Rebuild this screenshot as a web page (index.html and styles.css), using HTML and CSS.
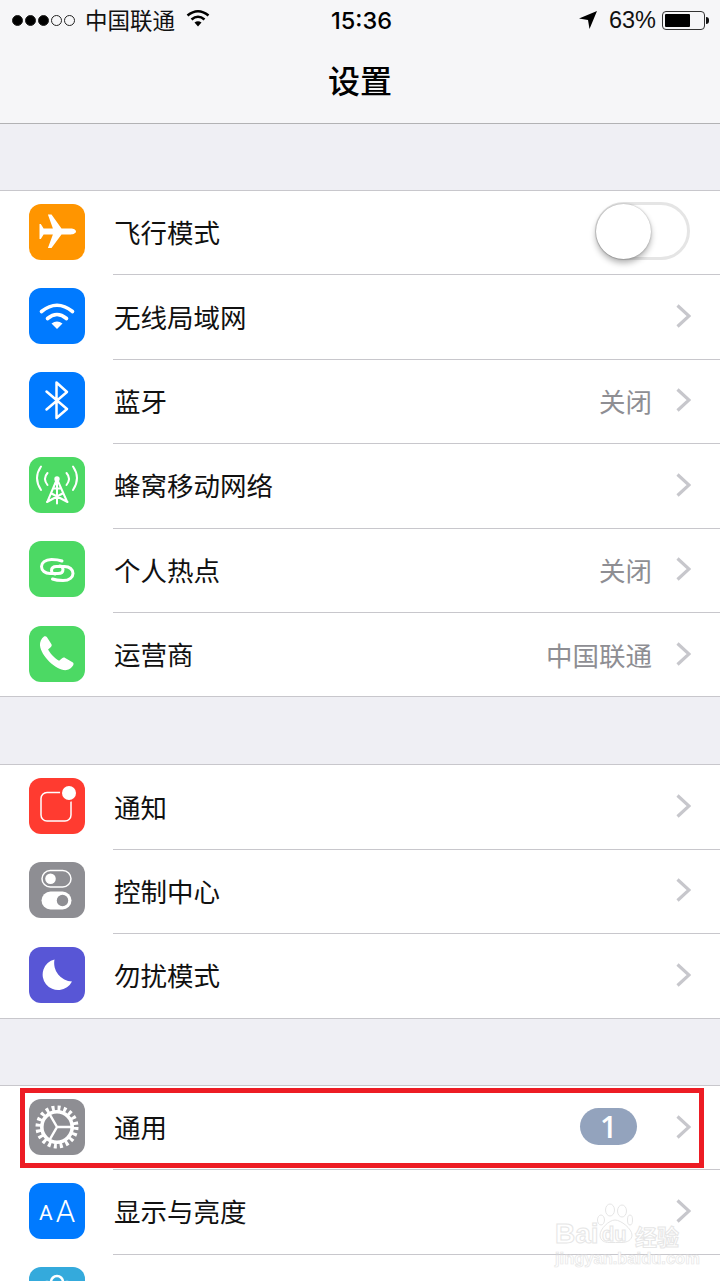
FILE: index.html
```html
<!DOCTYPE html>
<html lang="zh-CN">
<head>
    <meta charset="UTF-8">
    <meta name="viewport" content="width=device-width, initial-scale=1.0">
    <title>设置</title>
    <link rel="stylesheet" href="styles.css">
</head>
<body>
    <div class="screen">
        <header class="top">
            <div class="status">
                <div class="status-left">
                    <span class="dots"><i class="on"></i><i class="on"></i><i class="on"></i><i></i><i></i></span>
                    <span class="carrier">中国联通</span>
                    <svg class="st-wifi" viewBox="0 0 24 18" width="24" height="18">
                        <path class="st-arc" d="M1.500 6.500Q12-2 22.500 6.500M5.500 10.500Q12 5 18.500 10.500"/>
                        <path d="M12 17.500L8.500 13.500Q12 11 15.500 13.500Z"/>
                    </svg>
                </div>
                <div class="time">15:36</div>
                <div class="status-right">
                    <svg class="st-loc" viewBox="0 0 18 18" width="18" height="18"><path d="M18 0L10.500 18 9 9 0 7.500Z"/></svg>
                    <span class="pct">63%</span>
                    <span class="battery"><span class="battery-fill"></span></span>
                    <span class="battery-nub"></span>
                </div>
            </div>
            <div class="nav-title">设置</div>
        </header>

        <section class="group">
            <div class="row">
                <span class="icon orange">
                    <svg viewBox="0 0 56 56"><path class="w" d="M47 27.500c0-1.600-2.600-2.900-5-2.900H32.500L22.500 10.500h-3.600l5 14.100h-9.300l-2.800-4.500h-1.300v14.800h1.300l2.800-4.500h9.300l-5 13.700h3.600l10-13.700H42c2.400 0 5-1.300 5-2.900z"/></svg>
                </span>
                <span class="label">飞行模式</span>
                <span class="toggle"><span class="knob"></span></span>
            </div>
            <div class="row">
                <span class="icon blue">
                    <svg viewBox="0 0 56 56">
                        <path class="s s4" d="M12.500 23.500Q28 11 43.500 23.500"/>
                        <path class="s s4" d="M18.500 30.500Q28 22.500 37.500 30.500"/>
                        <path class="w" d="M28 41L22.500 35.500Q28 31.500 33.500 35.500Z"/>
                    </svg>
                </span>
                <span class="label">无线局域网</span>
                <svg class="chev" viewBox="0 0 15 24"><path d="M1.500 1.500L13 12 1.500 22.500"/></svg>
            </div>
            <div class="row">
                <span class="icon blue">
                    <svg viewBox="0 0 56 56"><path class="s s25" d="M17.500 19.500L38 37 27.500 46V10.500L38 20 17.500 37.500"/></svg>
                </span>
                <span class="label">蓝牙</span>
                <span class="value">关闭</span>
                <svg class="chev" viewBox="0 0 15 24"><path d="M1.500 1.500L13 12 1.500 22.500"/></svg>
            </div>
            <div class="row">
                <span class="icon green">
                    <svg viewBox="0 0 56 56">
                        <path class="s s2" d="M12 9.500Q4 21 12 33M44 9.500Q52 21 44 33M18.500 16Q13.500 21.500 18.500 28M37.500 16Q42.500 21.500 37.500 28"/>
                        <circle class="w" cx="28" cy="22" r="2.700"/>
                        <path class="s s2" d="M28 22V46.500M28 22L18.500 44.500M28 22L38 44.500M18 45L33.500 36.500M38.500 45L22.500 36.500M24.500 31.500H31.500"/>
                    </svg>
                </span>
                <span class="label">蜂窝移动网络</span>
                <svg class="chev" viewBox="0 0 15 24"><path d="M1.500 1.500L13 12 1.500 22.500"/></svg>
            </div>
            <div class="row">
                <span class="icon green">
                    <svg viewBox="0 0 56 56">
                        <path class="s s27" d="M33 20C29 18.500 26 18.500 22.500 18.500C16 18.500 12.500 22 12.500 25.500C12.500 29.500 16 32.500 21 32.500H29C32 32.500 34 31 34 28.500C34 26.500 32.500 25 30.500 25"/>
                        <path class="s s27" d="M23.500 38C27.500 39.500 30.500 39.500 34 39.500C40.500 39.500 44 36 44 32.500C44 28.500 40.500 25.500 35.500 25.500H27.500C24.500 25.500 22.500 27 22.500 29.500C22.500 31.500 24 33 26 33"/>
                    </svg>
                </span>
                <span class="label">个人热点</span>
                <span class="value">关闭</span>
                <svg class="chev" viewBox="0 0 15 24"><path d="M1.500 1.500L13 12 1.500 22.500"/></svg>
            </div>
            <div class="row">
                <span class="icon green">
                    <svg viewBox="0 0 56 56"><path class="w" d="M15 10.500c1.100-.6 2.300-.3 3 .8l4.300 6.600c.7 1 .5 2.200-.4 3l-2.800 2.500c1.600 3.400 6.500 8.900 11 11.300l3-2.500c.9-.7 2.100-.8 3.100-.2l7.300 4.300c1.100.6 1.400 1.900.7 2.900-1.600 2.400-3.800 4.500-6.800 4.900C27.500 45 12 30 11 19.500c-.3-3.500 1.200-7 4-9z"/></svg>
                </span>
                <span class="label">运营商</span>
                <span class="value">中国联通</span>
                <svg class="chev" viewBox="0 0 15 24"><path d="M1.500 1.500L13 12 1.500 22.500"/></svg>
            </div>
        </section>

        <section class="group">
            <div class="row">
                <span class="icon red">
                    <svg viewBox="0 0 56 56">
                        <rect class="s s15" x="12" y="14.500" width="30" height="28.500" rx="6"/>
                        <circle class="dot-halo" cx="40" cy="15" r="9"/>
                        <circle class="w" cx="40" cy="15" r="7"/>
                    </svg>
                </span>
                <span class="label">通知</span>
                <svg class="chev" viewBox="0 0 15 24"><path d="M1.500 1.500L13 12 1.500 22.500"/></svg>
            </div>
            <div class="row">
                <span class="icon gray">
                    <svg viewBox="0 0 56 56">
                        <rect class="s s15" x="13" y="8.500" width="29" height="16.500" rx="8.250"/>
                        <circle class="w" cx="21.500" cy="16.800" r="5.300"/>
                        <rect class="w" x="12.500" y="29.500" width="30" height="18" rx="9"/>
                        <circle class="gray-fill" cx="33.500" cy="38.500" r="5.700"/>
                    </svg>
                </span>
                <span class="label">控制中心</span>
                <svg class="chev" viewBox="0 0 15 24"><path d="M1.500 1.500L13 12 1.500 22.500"/></svg>
            </div>
            <div class="row">
                <span class="icon indigo">
                    <svg viewBox="0 0 56 56"><path class="w" d="M25.500 12.500A15.500 15.500 0 1 0 43 34.500 18.500 18.500 0 0 1 25.500 12.500Z"/></svg>
                </span>
                <span class="label">勿扰模式</span>
                <svg class="chev" viewBox="0 0 15 24"><path d="M1.500 1.500L13 12 1.500 22.500"/></svg>
            </div>
        </section>

        <section class="group group-last">
            <div class="row">
                <span class="icon gray">
                    <svg viewBox="0 0 56 56">
                        <circle class="teeth" cx="28" cy="28" r="18.500"/>
                        <circle class="s s35" cx="28" cy="28" r="15.200"/>
                        <path class="s s25" d="M28 28H43M28 28L20.500 15M28 28L20.500 41"/>
                    </svg>
                </span>
                <span class="label">通用</span>
                <span class="badge">1</span>
                <svg class="chev" viewBox="0 0 15 24"><path d="M1.500 1.500L13 12 1.500 22.500"/></svg>
            </div>
            <div class="row">
                <span class="icon blue aa"><span class="aa-s">A</span><span class="aa-b">A</span></span>
                <span class="label">显示与亮度</span>
                <svg class="chev" viewBox="0 0 15 24"><path d="M1.500 1.500L13 12 1.500 22.500"/></svg>
            </div>
            <div class="row">
                <span class="icon sky">
                    <svg viewBox="0 0 56 56">
                        <circle class="s s25" cx="28" cy="15" r="6"/>
                        <circle class="s s25" cx="18" cy="21" r="6"/>
                        <circle class="s s25" cx="38" cy="21" r="6"/>
                    </svg>
                </span>
            </div>
        </section>

        <!-- red annotation box and watermark sit over the list -->
        <div class="mark-box"></div>
        <div class="watermark">
            <svg class="paw" viewBox="0 0 36 40" width="36" height="40">
                <ellipse cx="13" cy="7" rx="4.500" ry="6"/>
                <ellipse cx="25" cy="8" rx="4.500" ry="6"/>
                <ellipse cx="4" cy="17" rx="3.500" ry="5"/>
                <ellipse cx="33" cy="17" rx="2.500" ry="5"/>
                <path d="M18 17C12 17 3 26 3 32 3 38 8 39.500 12 39.500 16 39.500 21 39.500 25 39.500 30 39.500 35 37 35 32 35 26 24 17 18 17Z"/>
            </svg>
            <div class="wm-brand">Bai</div>
            <div class="wm-du">du</div>
            <div class="wm-cn">经验</div>
            <div class="wm-url">jingyan.baidu.com</div>
        </div>
    </div>
</body>
</html>
```

FILE: styles.css
```css
* {
    margin: 0;
    padding: 0;
    box-sizing: border-box;
}

html, body {
    height: 100%;
    overflow: hidden;
}

body {
    font-family: "Noto Sans CJK SC", "Liberation Sans", sans-serif;
    background-color: #efeff4;
    color: #000;
}

.screen {
    position: relative;
    width: 720px;
    height: 1281px;
    overflow: hidden;
}

/* status bar + nav */
.top {
    height: 124px;
    background-color: #f6f6f8;
    border-bottom: 1px solid #b2b2b4;
}

.status {
    height: 40px;
    display: grid;
    grid-template-columns: 1fr auto 1fr;
    align-items: center;
    padding: 0 11px 0 12px;
}

.status-left, .status-right {
    display: flex;
    align-items: center;
}

.status-right {
    justify-content: flex-end;
}

.dots {
    display: flex;
    gap: 2px;
}

.dots i {
    width: 11px;
    height: 11px;
    border-radius: 50%;
    border: 1px solid #222;
}

.dots i.on {
    background-color: #000;
}

.carrier {
    margin-left: 10px;
    margin-top: -3px;
    font-size: 22.5px;
    line-height: 40px;
    color: #111;
}

.st-wifi {
    margin-left: 11px;
    margin-top: -5px;
}

.st-arc {
    fill: none;
    stroke: #000;
    stroke-width: 2.6;
}

.time {
    font-family: "Inter", "Liberation Sans", sans-serif;
    font-size: 23.5px;
    font-weight: 500;
    margin-left: 2px;
}

.st-loc {
    margin-right: 12px;
}

.pct {
    font-family: "Liberation Sans", sans-serif;
    font-size: 23.5px;
    margin-right: 6px;
    color: #111;
}

.battery {
    width: 43px;
    height: 19px;
    border: 1px solid #333;
    border-radius: 4px;
    padding: 2px;
    display: block;
}

.battery-fill {
    display: block;
    width: 25px;
    height: 100%;
    background-color: #000;
    border-radius: 1px;
}

.battery-nub {
    width: 3px;
    height: 7px;
    background-color: #111;
    border-radius: 0 3px 3px 0;
    margin-left: 1px;
}

.nav-title {
    height: 83px;
    line-height: 78px;
    text-align: center;
    font-size: 32px;
    font-weight: 500;
}

/* list groups */
.group {
    margin-top: 67px;
    background-color: #fff;
    border-top: 1px solid #c8c7cc;
}

.top + .group {
    margin-top: 66px;
}

.group-last {
    margin-top: 66.4px;
}

.row {
    height: 84.4px;
    display: flex;
    align-items: center;
    padding: 0 29px 2px;
    position: relative;
    border-bottom: 1px solid #c8c7cc;
}

.row::after {
    content: "";
    position: absolute;
    left: 0;
    bottom: -1px;
    width: 113px;
    height: 1px;
    background-color: #fff;
}

.row:last-child::after {
    display: none;
}

.icon {
    width: 56px;
    height: 56px;
    border-radius: 12px;
    flex-shrink: 0;
    display: block;
}

.icon svg {
    display: block;
    width: 56px;
    height: 56px;
}

.orange { background-color: #ff9500; }
.blue { background-color: #007aff; }
.green { background-color: #4cd964; }
.red { background-color: #ff3b30; }
.gray { background-color: #8e8e93; }
.indigo { background-color: #5856d6; }
.sky { background-color: #34aadc; }

.w { fill: #fff; }
.gray-fill { fill: #8e8e93; }
.dot-halo { fill: #ff3b30; }

.s {
    fill: none;
    stroke: #fff;
    stroke-linecap: round;
    stroke-linejoin: round;
}

.s15 { stroke-width: 1.500; }
.s2 { stroke-width: 2; }
.s25 { stroke-width: 2.500; }
.s27 { stroke-width: 3; }
.s35 { stroke-width: 3.600; }
.s4 { stroke-width: 3.600; }

.teeth {
    fill: none;
    stroke: #fff;
    stroke-width: 6;
    stroke-dasharray: 2.906 2.906;
}

.aa {
    display: flex;
    align-items: baseline;
    justify-content: center;
    color: #fff;
    font-family: "Roboto", "Liberation Sans", sans-serif;
    font-weight: 300;
    line-height: 56px;
    padding-top: 1px;
}

.aa-s {
    font-size: 21px;
    font-weight: 400;
    margin-right: 3px;
    transform: translateY(-2px);
}

.aa-b {
    font-size: 31px;
}

.label {
    margin-left: 29px;
    margin-top: 1px;
    font-size: 26.5px;
    line-height: 40px;
    flex: 1;
    color: #111;
}

.value {
    font-size: 26.5px;
    color: #8e8e93;
    margin-top: 1px;
    margin-right: 24px;
}

.chev {
    width: 15px;
    height: 24px;
    fill: none;
    stroke: #c7c7cc;
    stroke-width: 3.200;
    flex-shrink: 0;
}

.toggle {
    width: 95px;
    height: 58px;
    margin-left: auto;
    margin-right: 1px;
    margin-bottom: 2px;
    border: 3px solid #e5e5e5;
    border-radius: 29px;
    position: relative;
}

.knob {
    position: absolute;
    left: -2px;
    top: -1px;
    width: 55px;
    height: 55px;
    border-radius: 50%;
    background-color: #fff;
    box-shadow: 0 4px 6px rgba(0, 0, 0, 0.3), 0 0 2px rgba(0, 0, 0, 0.3);
}

.badge {
    width: 57px;
    height: 37px;
    border-radius: 19px;
    background-color: #93a3bd;
    color: #fff;
    font-family: "Open Sans", "Liberation Sans", sans-serif;
    font-size: 30px;
    font-weight: 600;
    line-height: 37px;
    text-align: center;
    margin-right: 39px;
}

/* overlays */
.mark-box {
    position: absolute;
    left: 20px;
    top: 1088px;
    width: 684px;
    height: 80px;
    border: 5px solid #ed1c24;
}

.watermark {
    position: absolute;
    left: 555px;
    top: 1203px;
    width: 126px;
    height: 62px;
    color: #fff;
    font-family: "Liberation Sans", sans-serif;
    font-weight: 700;
    -webkit-text-stroke: 1px #e6e6e6;
}

.paw {
    position: absolute;
    left: 42px;
    top: 0;
    fill: #fff;
    stroke: #e6e6e6;
    stroke-width: 1;
}

.wm-brand {
    position: absolute;
    left: 0;
    top: 15px;
    font-size: 28px;
    line-height: 32px;
}

.wm-du {
    position: absolute;
    left: 47px;
    top: 19px;
    font-size: 20px;
    line-height: 24px;
}

.wm-cn {
    position: absolute;
    left: 80px;
    top: 16px;
    font-family: "Noto Sans CJK SC", sans-serif;
    font-size: 22px;
    line-height: 32px;
}

.wm-url {
    position: absolute;
    left: 0;
    top: 46px;
    font-size: 16.5px;
    line-height: 18px;
    white-space: nowrap;
    -webkit-text-stroke: 0.7px #e6e6e6;
}
```
